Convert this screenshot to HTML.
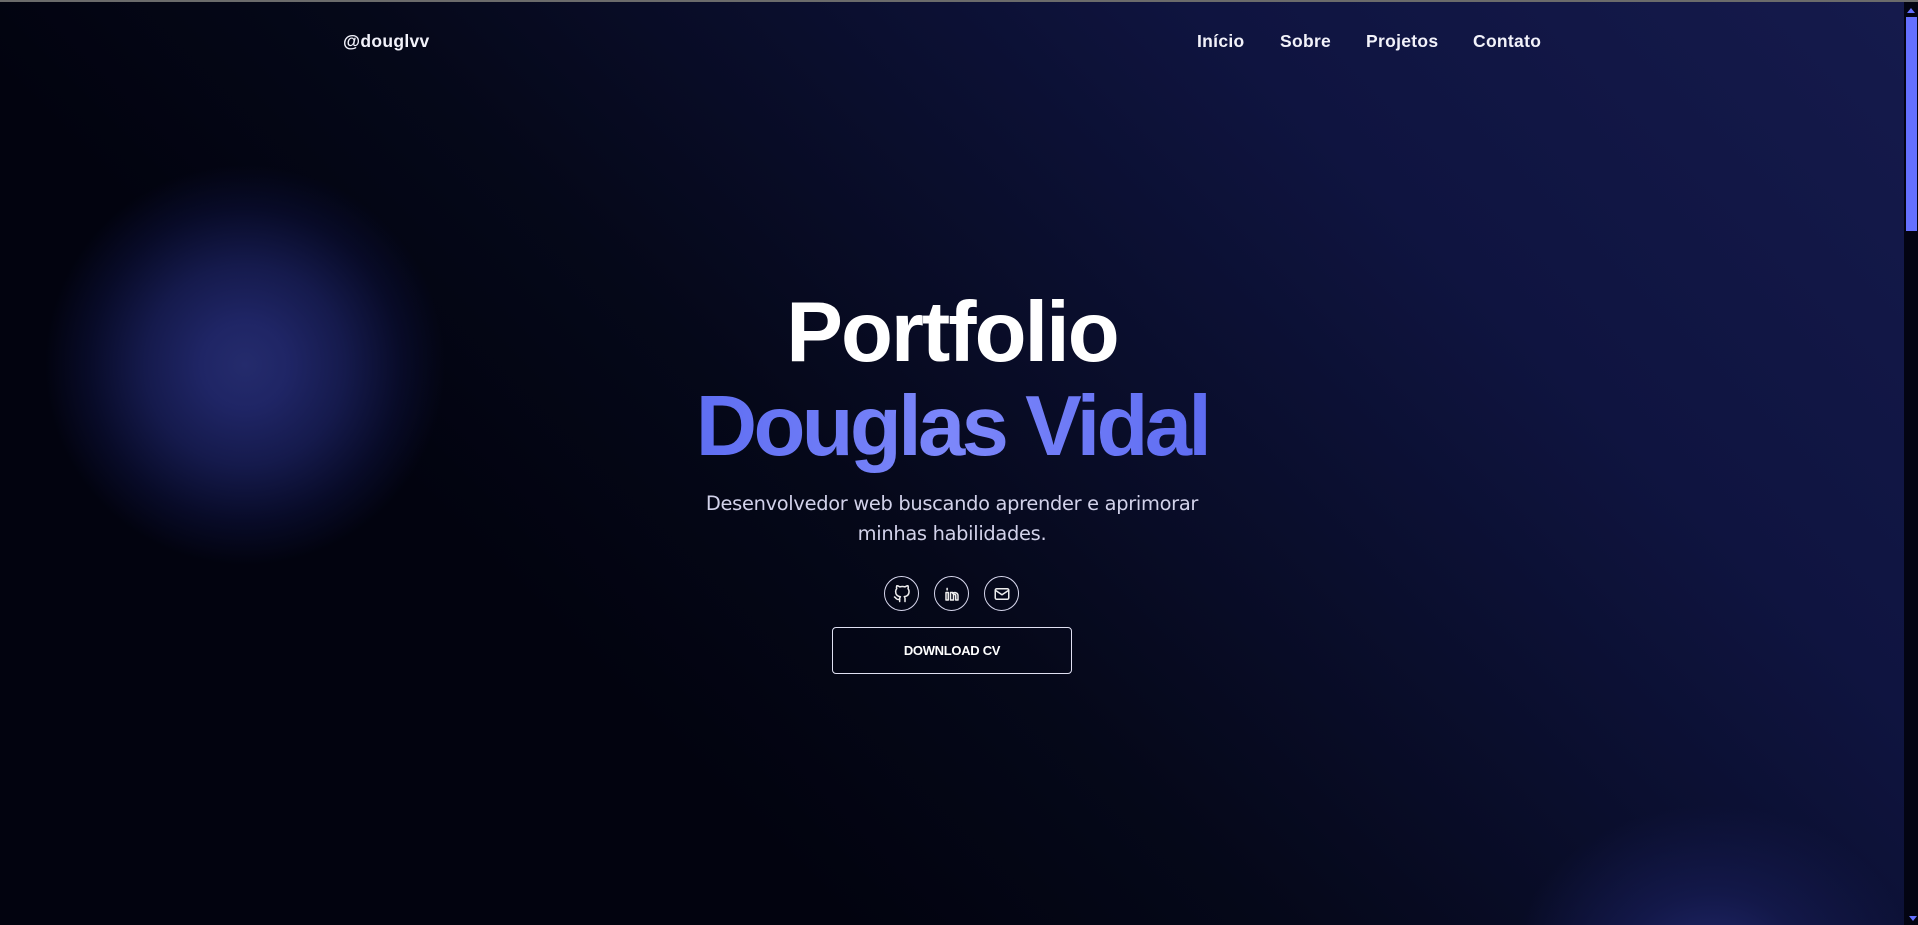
<!DOCTYPE html>
<html><head><meta charset="utf-8"><style>
*{margin:0;padding:0;box-sizing:border-box}
html,body{width:1918px;height:925px;overflow:hidden}
body{position:relative;background:#02030f;font-family:"Liberation Sans",sans-serif;color:#fff}
.bg{position:absolute;left:0;top:0;width:1904px;height:925px;
background:
radial-gradient(circle 200px at 245px 365px,#242b6c 0%,#1f2565 22%,#151a4c 50%,#080b28 78%,rgba(2,3,15,0) 100%),
radial-gradient(ellipse 200px 160px at 1713px 965px,#20276a 0%,#131849 45%,rgba(2,3,15,0) 100%),
linear-gradient(225deg,#151a4c 0%,#0f1440 25%,#050819 55%,#02030f 70%)}
.topline{position:absolute;left:0;top:0;width:1918px;height:2px;background:#6b6b6b}
.sb{position:absolute;left:1904px;top:2px;width:14px;height:923px;background:#030412}
.thumb{position:absolute;left:1906px;top:17px;width:11px;height:214px;background:#6570ff}
.up{position:absolute;left:1907px;top:8px;width:0;height:0;border-left:4px solid transparent;border-right:4px solid transparent;border-bottom:5px solid #6570ff}
.dn{position:absolute;left:1909px;top:916px;width:0;height:0;border-left:4px solid transparent;border-right:4px solid transparent;border-top:5px solid #6570ff}
.nav{position:absolute;top:31px;font-size:17.5px;font-weight:bold;color:#f2f2fa;letter-spacing:0.3px}
.t1,.t2{position:absolute;left:0;width:1904px;text-align:center;font-weight:bold;font-size:85px;line-height:1}
.t1{top:290px;letter-spacing:-2px;color:#fff}
.t2{top:384px;letter-spacing:-3.7px}
.t2 span{background:linear-gradient(90deg,#5f6ef2,#7c87fa 50%,#5e6cf2);-webkit-background-clip:text;background-clip:text;color:transparent}
.sub{position:absolute;left:0;width:1904px;top:489px;text-align:center;font-family:"DejaVu Sans","Liberation Sans",sans-serif;font-size:19.4px;line-height:30px;color:#d2d2ea;letter-spacing:-0.3px}
.ic{position:absolute;top:576px;width:35px;height:35px;border:1.3px solid #d8d8ee;border-radius:50%}
.ic svg{position:absolute;left:8px;top:8px}
.btn{position:absolute;left:832px;top:627px;width:240px;height:47px;border:1.3px solid #e0e0f2;border-radius:4px;text-align:center;line-height:45px;font-size:13px;font-weight:bold;color:#fff;letter-spacing:-0.3px}
</style></head><body>
<div class="bg"></div>
<div class="topline"></div>
<div class="sb"></div><div class="thumb"></div><div class="up"></div><div class="dn"></div>
<div class="nav" style="left:343px">@douglvv</div>
<div class="nav" style="left:1197px">Início</div>
<div class="nav" style="left:1280px">Sobre</div>
<div class="nav" style="left:1366px">Projetos</div>
<div class="nav" style="left:1473px">Contato</div>
<div class="t1">Portfolio</div>
<div class="t2"><span>Douglas Vidal</span></div>
<div class="sub">Desenvolvedor web buscando aprender e aprimorar<br>minhas habilidades.</div>
<div class="ic" style="left:884px"><svg width="18" height="18" viewBox="0 0 24 24" fill="none" stroke="#eee" stroke-width="2" stroke-linecap="round" stroke-linejoin="round"><path d="M9 19c-5 1.5-5-2.5-7-3m14 6v-3.9a3.4 3.4 0 0 0-1-2.6c3.1-.3 6.4-1.5 6.4-7A5.4 5.4 0 0 0 20 4.8 5 5 0 0 0 19.9 1S18.7.7 16 2.5a13.4 13.4 0 0 0-7 0C6.3.7 5.1 1 5.1 1A5 5 0 0 0 5 4.8a5.4 5.4 0 0 0-1.5 3.8c0 5.4 3.3 6.6 6.4 7a3.4 3.4 0 0 0-1 2.6V22"/></svg></div>
<div class="ic" style="left:934px"><svg width="18" height="18" viewBox="0 0 24 24" fill="none" stroke="#eee" stroke-width="2" stroke-linecap="round" stroke-linejoin="round"><path d="M4 10v10h3V10zM5.5 4.5v2M10 20V10h3v1.5a4 4 0 0 1 7 2.5V20h-3v-6a1.5 1.5 0 0 0-3 0v6z"/></svg></div>
<div class="ic" style="left:984px"><svg width="18" height="18" viewBox="0 0 24 24" fill="none" stroke="#eee" stroke-width="2" stroke-linecap="round" stroke-linejoin="round"><rect x="3" y="5" width="18" height="14" rx="2"/><path d="M3 7l9 6 9-6"/></svg></div>
<div class="btn">DOWNLOAD CV</div>
</body></html>
